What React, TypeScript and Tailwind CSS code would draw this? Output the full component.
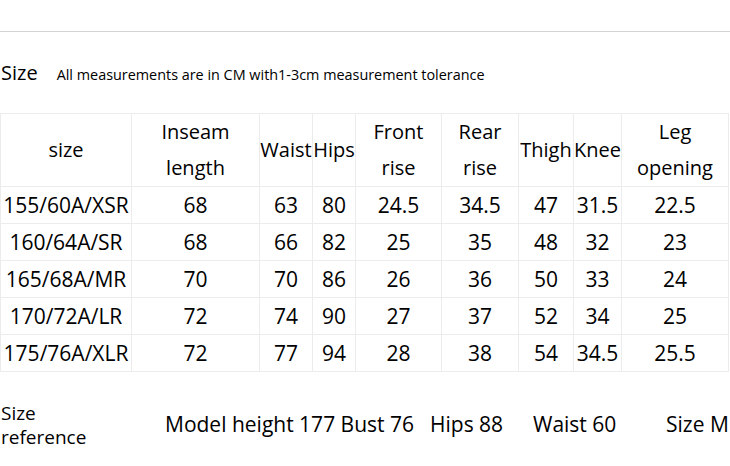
const headers = ['size', 'Inseam length', 'Waist', 'Hips', 'Front rise', 'Rear rise', 'Thigh', 'Knee', 'Leg opening'];

const widths = ['w-[131px]', 'w-[128px]', 'w-[53px]', 'w-[43px]', 'w-[86px]', 'w-[77px]', 'w-[55px]', 'w-[48px]', 'w-[107px]'];

const rows = [
  ['155/60A/XSR', '68', '63', '80', '24.5', '34.5', '47', '31.5', '22.5'],
  ['160/64A/SR', '68', '66', '82', '25', '35', '48', '32', '23'],
  ['165/68A/MR', '70', '70', '86', '26', '36', '50', '33', '24'],
  ['170/72A/LR', '72', '74', '90', '27', '37', '52', '34', '25'],
  ['175/76A/XLR', '72', '77', '94', '28', '38', '54', '34.5', '25.5'],
];

export default function App() {
  return (
    <div className="w-[730px] h-[466px] bg-white text-black overflow-hidden font-['Open_Sans','Noto_Sans',sans-serif]">
      <div className="h-[31px]" />
      <div className="h-px bg-[#d4d4d4]" />

      <div className="flex items-baseline pt-[26px] h-[81px]">
        <span className="text-[20px] pl-px">Size</span>
        <span className="text-[14.4px] ml-[19px]">All measurements are in CM with1-3cm measurement tolerance</span>
      </div>

      <table className="table-fixed border-collapse w-[729px] text-[20px]">
        <colgroup>
          {widths.map((w, i) => (
            <col key={i} className={w} />
          ))}
        </colgroup>
        <thead>
          <tr className="h-[73px]">
            {headers.map((h) => (
              <th key={h} className="border border-[#ececec] font-normal text-center leading-[36px] px-0 whitespace-normal">
                {h}
              </th>
            ))}
          </tr>
        </thead>
        <tbody className="text-[21px]">
          {rows.map((r) => (
            <tr key={r[0]} className="h-[37px]">
              {r.map((c, i) => (
                <td key={i} className="border border-[#ececec] text-center leading-[36px] px-0 whitespace-nowrap">
                  {c}
                </td>
              ))}
            </tr>
          ))}
        </tbody>
      </table>

      <div className="flex items-center mt-[29px] text-[21px]">
        <div className="w-[165px] text-[19px] leading-[24px] pl-px">
          Size<br />reference
        </div>
        <span className="w-[265px]">Model height 177 Bust 76</span>
        <span className="w-[103px]">Hips 88</span>
        <span className="w-[133px]">Waist 60</span>
        <span className="whitespace-nowrap">Size M</span>
      </div>
    </div>
  );
}
